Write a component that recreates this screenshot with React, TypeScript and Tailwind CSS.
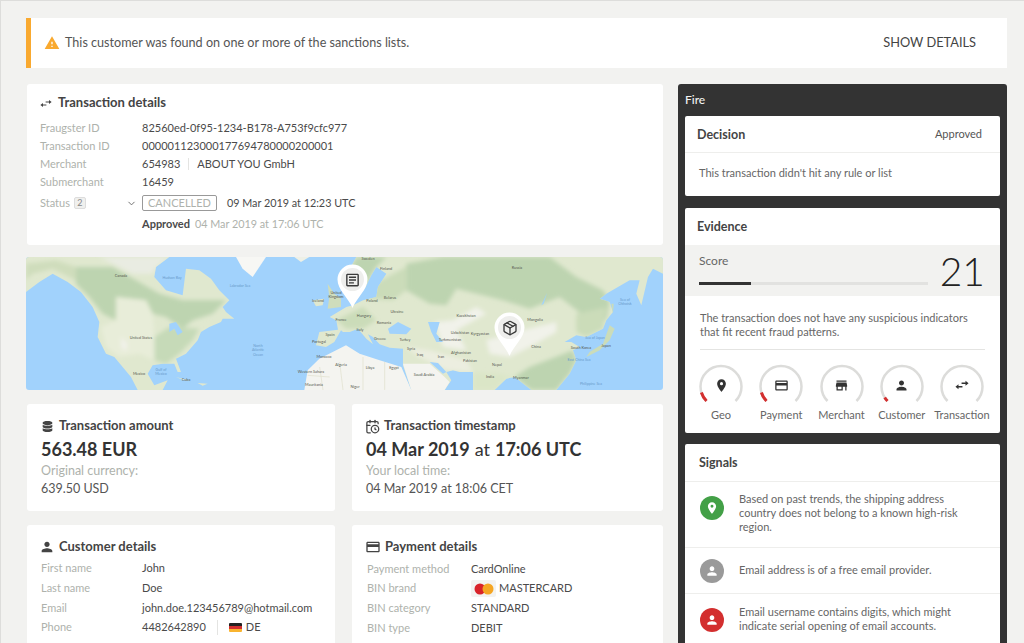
import { CalendarClock, ChevronDown, Package } from 'lucide-react';
import { FaDatabase } from 'react-icons/fa';
import { MdCreditCard, MdLocationOn, MdOutlineArticle, MdPerson, MdStore, MdWarning } from 'react-icons/md';
import type { ReactNode } from 'react';

const SEA = '#a1d2fc';
const LAND = '#e0e8cf';
const FOREST = '#bdd4b0';
const PALE = '#f1f2ea';

const AMERICA =
  'M0 0H430L390 30L385 60L420 100L470 115L480 35L520 40L555 65L580 100L610 130L590 150L600 165L625 185L590 185L585 195L550 210L525 225L515 250L480 290L450 305L465 345L455 345L445 320L410 320L380 325L365 350L385 385L425 370L410 399H335L315 360L265 300L240 290L215 240L220 195L200 150L165 105L125 75L80 50L40 75L0 105Z';
const EURASIA =
  'M40 0H960V50L930 35L915 60L895 145L880 110L890 70L860 70L790 110L770 125L800 135L810 165L790 190L780 215L730 240L700 235L665 255L685 255L710 270L690 280L700 310L680 350L640 399H565L515 360L490 365L455 399H390V345L350 345L330 340L310 345L325 370L305 399H205L180 325L180 275L140 272L110 262L90 240L75 232L90 262L70 245L45 215L20 225L0 225L-6 220L-26 255L-51 270L-81 265L-71 225L-15 218L-20 190L-40 180L10 150L30 145L60 130L100 120L105 90L130 50L100 30L85 55L65 95L30 100L10 55Z';

const labels: [string, number, number][] = [
  ['Canada', 95, 20],
  ['United States', 115, 82],
  ['Mexico', 113, 118],
  ['Cuba', 160, 124],
  ['Iceland', 292, 45],
  ['United', 310, 37],
  ['Kingdom', 310, 40.5],
  ['Spain', 304, 79],
  ['Portugal', 293, 86],
  ['France', 315, 64],
  ['Morocco', 298, 101],
  ['Algeria', 315, 109],
  ['Mauritania', 288, 129],
  ['Western Sahara', 285, 116],
  ['Sweden', 342, 3],
  ['Finland', 360, 13],
  ['Poland', 346, 45],
  ['Belarus', 364, 42],
  ['Ukraine', 371, 56],
  ['Romania', 358, 67],
  ['Italy', 334, 74],
  ['Greece', 354, 83],
  ['Turkey', 379, 84],
  ['Hungary', 338, 60],
  ['Syria', 385, 93],
  ['Iraq', 394, 99],
  ['Iran', 415, 101],
  ['Afghanistan', 435, 97],
  ['Pakistan', 444, 105],
  ['Saudi Arabia', 398, 119],
  ['Libya', 344, 112],
  ['Egypt', 368, 112],
  ['Niger', 329, 131],
  ['Kazakhstan', 440, 60],
  ['Uzbekistan', 434, 77],
  ['Kyrgyzstan', 454, 78],
  ['Turkmenistan', 424, 84],
  ['Mongolia', 509, 64],
  ['China', 510, 91],
  ['Nepal', 471, 109],
  ['India', 464, 121],
  ['Myanmar', 495, 122],
  ['Russia', 491, 12],
  ['South Korea', 555, 92],
  ['Japan', 580, 90],
];

const seaLabels: [string, number, number][] = [
  ['Hudson Bay', 146, 22],
  ['Labrador Sea', 214, 30],
  ['North', 232, 90],
  ['Atlantic', 232, 94],
  ['Ocean', 232, 99],
  ['Gulf of', 135, 114],
  ['Mexico', 135, 118],
  ['Sea of Japan', 569, 82],
  ['East China Sea', 553, 104],
  ['Philippine Sea', 565, 128],
  ['Sea of', 599, 44],
  ['Okhotsk', 599, 47.5],
];

// Two stubby arrows, the packages' compare/swap icons come out too thin at this size.
function Arrows({ className }: { className?: string }) {
  return (
    <svg viewBox="0 0 16 16" className={className} fill="currentColor">
      <path d="M7.5 5.2H12V3.2L15.5 6L12 8.8V6.8H7.5Z" />
      <path d="M8.5 10.8H4V12.8L0.5 10L4 7.2V9.2H8.5Z" />
    </svg>
  );
}

// Coastlines traced at 3x from two crops of the map: Americas on the left, Eurasia on the right.
function WorldMap() {
  return (
    <svg viewBox="0 0 637 133" className="block w-full h-full">
      <defs>
        <filter id="soft" x="-10%" y="-10%" width="120%" height="120%">
          <feGaussianBlur stdDeviation="7" />
        </filter>
        <clipPath id="america">
          <path d={AMERICA} />
        </clipPath>
        <clipPath id="eurasia">
          <path d={EURASIA} />
        </clipPath>
      </defs>
      <rect width="637" height="133" fill={SEA} />
      <g transform="scale(0.3333)">
        <path d={AMERICA} fill={LAND} />
        <g clipPath="url(#america)">
          <g filter="url(#soft)">
            <path d="M220 0H430L390 30L380 50L320 50L260 20Z" fill="#e9ece2" />
            <path d="M150 30L260 30L330 70L400 110L470 130L600 130L560 170L500 190L470 215L420 180L380 170L360 130L270 120L270 190L230 170L190 120L150 80Z" fill={FOREST} />
            <path d="M385 240L430 210L520 215L500 250L460 290L420 320L385 310Z" fill="#c6dab8" />
            <path d="M0 20L90 10L150 30L150 70L80 35L20 50L0 70Z" fill="#cfddbc" />
            <path d="M270 120L360 130L380 170L385 240L385 310L340 290L280 300L240 270L225 210L270 190Z" fill="#e8edd9" />
            <path d="M285 240L305 260L300 285L285 270Z" fill={PALE} />
          </g>
        </g>
        <path d="M430 200L450 195L470 225L455 235L445 215L430 225Z" fill={SEA} />
        <path d="M450 360L495 372L470 368Z" fill={LAND} />
        <path d="M515 378L545 380L530 386Z" fill={LAND} />
        <path d="M630 0H720L680 60L650 35Z" fill="#f7f7f4" />
        <path d="M805 0H850L825 15Z" fill="#eef0e6" />
        <path d="M860 130L895 125L890 145L870 148Z" fill={LAND} />
        <path d="M905 80L925 110L945 125L945 150L905 155L910 120Z" fill="#cfddbc" />
      </g>
      <g transform="translate(317 0) scale(0.3333)">
        <path d={EURASIA} fill={LAND} />
        <g clipPath="url(#eurasia)">
          <g filter="url(#soft)">
            <path d="M190 20L300 0H620L700 60L780 100L800 135L790 190L715 170L650 120L560 155L480 130L420 115L340 95L310 145L260 140L190 100Z" fill={FOREST} />
            <path d="M75 90L190 30V100L150 130L75 125Z" fill="#cbdcb9" />
            <path d="M40 0H130L100 30L85 55L65 95L30 100L10 55Z" fill={FOREST} />
            <path d="M-20 190L60 150L100 190L60 215L10 215Z" fill="#cbdcb9" />
            <path d="M560 330L690 280L700 310L680 350L640 399H565L515 360Z" fill={FOREST} />
            <path d="M700 170L790 150L780 215L730 240L700 225Z" fill="#cbdcb9" />
            <path d="M540 220L640 195V225L560 270L500 300L440 290L430 250Z" fill={PALE} />
            <path d="M275 195L330 190L400 150L430 170L340 220L370 280L300 270Z" fill={PALE} />
            <path d="M190 270L260 280L370 310L390 345L310 340L260 315L230 300Z" fill="#eceee0" />
            <path d="M390 345L470 350L515 360L490 365L455 399H390Z" fill="#dbe6c7" />
          </g>
        </g>
        <path d="M180 320L260 320L305 360L320 375L305 399H205Z" fill="#f4f4f0" />
        {/* Africa */}
        <path d="M-116 399L-106 340L-71 305L9 265L50 290L110 310L175 330L205 399Z" fill="#f4f4f0" />
        <path d="M-60 399L-70 330M0 399L-10 315M60 399V300M125 399V315M-106 355L-40 360" fill="none" stroke="#dfe0cc" strokeWidth="2" />
        {/* Seas and islands */}
        <path d="M135 215L165 195L205 215L190 232L140 230Z" fill={SEA} />
        <path d="M255 195L290 195L280 230L300 255L280 255L265 225Z" fill={SEA} />
        <path d="M260 315L300 350L310 345L285 318Z" fill={SEA} />
        <path d="M595 145L612 108L602 140Z" fill={SEA} />
        <path d="M800 205L815 215L800 250L770 280L730 300L740 285L780 260Z" fill="#cbdcb9" />
        <path d="M805 140L812 140L810 170Z" fill="#cbdcb9" />
      </g>
      {labels.map(([text, x, y]) => (
        <text key={text} x={x} y={y} fontSize="3.8" textAnchor="middle" fill="#55584f" fontFamily="Lato, sans-serif">
          {text}
        </text>
      ))}
      {seaLabels.map(([text, x, y]) => (
        <text key={text + y} x={x} y={y} fontSize="3.6" textAnchor="middle" fill="#6a9bcb" fontFamily="Lato, sans-serif">
          {text}
        </text>
      ))}
    </svg>
  );
}

function Pin({ className, children }: { className: string; children: ReactNode }) {
  return (
    <div className={`absolute w-[31px] h-[44px] ${className}`}>
      <svg viewBox="0 0 31 44" className="absolute inset-0 w-full h-full">
        <path d="M15.5 44C11 33 0.5 26 0.5 15.5a15 15 0 0 1 30 0C30.5 26 20 33 15.5 44Z" fill="#fff" />
        <circle cx="15.5" cy="15.5" r="11.5" fill="#eeeeec" />
      </svg>
      <div className="absolute left-[7px] top-[7px] w-[17px] h-[17px] flex items-center justify-center text-[#3a3a3a]">{children}</div>
    </div>
  );
}

function Title({ icon, children }: { icon: ReactNode; children: ReactNode }) {
  return (
    <div className="flex items-center gap-[6px] h-[16px] text-[13px] font-bold text-[#444]">
      <span className="w-[12px] flex justify-center text-[#444]">{icon}</span>
      {children}
    </div>
  );
}

function Row({ label, h, w, children }: { label: ReactNode; h: string; w: string; children: ReactNode }) {
  return (
    <div className={`flex items-center ${h}`}>
      <div className={`${w} shrink-0 text-[#aeb2ac]`}>{label}</div>
      <div className="flex items-center text-[#4a4a4a]">{children}</div>
    </div>
  );
}

function StatCard({ w, icon, title, big, sub, value }: { w: string; icon: ReactNode; title: string; big: ReactNode; sub: string; value: string }) {
  return (
    <div className={`${w} h-[107px] bg-white rounded-[3px] pl-[14px] pt-[14px]`}>
      <Title icon={icon}>{title}</Title>
      <div className="mt-[2px] h-[26px] flex items-center text-[18px] font-bold text-[#333]">{big}</div>
      <div className="mt-[1px] text-[12.5px] leading-[16px] text-[#aeb2ac]">{sub}</div>
      <div className="mt-[1px] text-[12.5px] leading-[18px] text-[#555]">{value}</div>
    </div>
  );
}

function Gauge({ label, red, children }: { label: string; red: string; children: ReactNode }) {
  return (
    <div className="flex flex-col items-center w-[58px]">
      <div className="relative w-[44px] h-[42px]">
        <svg viewBox="0 0 44 42" className="absolute inset-0 w-full h-full" fill="none" strokeWidth="2.5">
          <path d="M7.5 37A20.5 20.5 0 1 1 36.5 37" stroke="#dcdcda" />
          {red && <path d={red} stroke="#d32f2f" strokeWidth="3" />}
        </svg>
        <div className="absolute inset-0 flex items-center justify-center text-[#333] text-[15px]">{children}</div>
      </div>
      <div className="mt-[2px] text-[11px] leading-[14px] text-[#666]">{label}</div>
    </div>
  );
}

function Signal({ color, icon, children, h, lift, iconLift }: { color: string; icon: ReactNode; children: ReactNode; h: string; lift: string; iconLift: string }) {
  return (
    <div className={`flex items-center pl-[15px] pr-[20px] border-t border-[#eeeeec] ${h}`}>
      <div className={`w-[24px] h-[24px] shrink-0 rounded-full flex items-center justify-center text-white text-[14px] ${color} ${iconLift}`}>{icon}</div>
      <div className={`ml-[15px] text-[11px] leading-[14px] text-[#666] ${lift}`}>{children}</div>
    </div>
  );
}

export default function App() {
  return (
    <div className="w-[1024px] h-[643px] overflow-hidden bg-[#f2f2f0] border-t border-l border-[#dddddb] pl-[25px] pt-[17px] font-['Lato',sans-serif]">
      {/* Sanctions banner */}
      <div className="w-[981px] h-[50px] bg-white border-l-[5px] border-[#f9a92f] flex items-center pl-[13px] pr-[31px]">
        <MdWarning className="text-[#f9a92f] text-[16px]" />
        <span className="ml-[5px] text-[12.6px] text-[#555]">This customer was found on one or more of the sanctions lists.</span>
        <span className="ml-auto text-[12.8px] text-[#444]">SHOW DETAILS</span>
      </div>

      <div className="flex gap-[15px] mt-[16px]">
        {/* Left column */}
        <div className="w-[637px] shrink-0">
          <div className="h-[161px] bg-white rounded-[3px] pl-[13px] pt-[11px] ml-[1px] text-[11px]">
            <Title icon={<Arrows className="w-[13px] h-[13px]" />}>Transaction details</Title>
            <div className="mt-[8px]">
              <Row label="Fraugster ID" h="h-[18px]" w="w-[102px]">82560ed-0f95-1234-B178-A753f9cfc977</Row>
              <Row label="Transaction ID" h="h-[18px]" w="w-[102px]">000001123000177694780000200001</Row>
              <Row label="Merchant" h="h-[18px]" w="w-[102px]">
                654983
                <span className="mx-[8px] h-[12px] border-l border-[#e4e4e2]" />
                ABOUT YOU GmbH
              </Row>
              <Row label="Submerchant" h="h-[18px]" w="w-[102px]">16459</Row>
              <Row
                h="h-[24px]"
                w="w-[102px]"
                label={
                  <div className="flex items-center">
                    Status
                    <span className="ml-[4px] w-[12px] h-[12px] bg-[#f0f0ee] border border-[#ddd] rounded-[2px] text-[9px] leading-[10px] text-center text-[#888]">2</span>
                    <ChevronDown className="ml-[40px] w-[11px] h-[11px] text-[#666]" />
                  </div>
                }
              >
                <span className="h-[16px] px-[5px] border border-[#999] rounded-[2px] text-[11px] leading-[14px] text-[#aeb2ac]">CANCELLED</span>
                <span className="ml-[10px] text-[10.8px]">09 Mar 2019 at 12:23 UTC</span>
              </Row>
              <Row label="" h="h-[18px]" w="w-[102px]">
                <b className="font-bold">Approved</b>
                <span className="ml-[5px] text-[10.8px] text-[#aeb2ac]">04 Mar 2019 at 17:06 UTC</span>
              </Row>
            </div>
          </div>

          <div className="relative h-[133px] mt-[12px] rounded-[3px] overflow-hidden">
            <WorldMap />
            <Pin className="left-[311px] top-[7px]"><MdOutlineArticle className="text-[18px]" /></Pin>
            <Pin className="left-[468px] top-[55px]"><Package className="w-[16px] h-[16px]" /></Pin>
          </div>

          <div className="flex gap-[17px] mt-[14px] ml-[1px]">
            <StatCard w="w-[308px]" icon={<FaDatabase className="text-[11px]" />} title="Transaction amount" big="563.48 EUR" sub="Original currency:" value="639.50 USD" />
            <StatCard
              w="w-[311px]"
              icon={<CalendarClock className="w-[15px] h-[15px] shrink-0" />}
              title="Transaction timestamp"
              big={
                <>
                  04 Mar 2019 <span className="font-normal mx-[5px]">at</span> 17:06 UTC
                </>
              }
              sub="Your local time:"
              value="04 Mar 2019 at 18:06 CET"
            />
          </div>

          <div className="flex gap-[17px] mt-[14px] ml-[1px] text-[11px]">
            <div className="w-[308px] h-[130px] bg-white rounded-[3px] pl-[14px] pt-[14px]">
              <Title icon={<MdPerson className="text-[16px] shrink-0" />}>Customer details</Title>
              <div className="mt-[3px]">
                <Row label="First name" h="h-[20px]" w="w-[101px]">John</Row>
                <Row label="Last name" h="h-[20px]" w="w-[101px]">Doe</Row>
                <Row label="Email" h="h-[20px]" w="w-[101px]">john.doe.123456789@hotmail.com</Row>
                <Row label="Phone" h="h-[18px]" w="w-[101px]">
                  4482642890
                  <span className="mx-[11px] h-[15px] border-l border-[#e4e4e2]" />
                  <span className="w-[13px] h-[9px] rounded-[1px] overflow-hidden flex flex-col">
                    <span className="h-[3px] bg-[#222]" />
                    <span className="h-[3px] bg-[#d32f2f]" />
                    <span className="h-[3px] bg-[#f9b42f]" />
                  </span>
                  <span className="ml-[4px]">DE</span>
                </Row>
              </div>
            </div>
            <div className="w-[311px] h-[130px] bg-white rounded-[3px] pl-[15px] pt-[14px]">
              <Title icon={<MdCreditCard className="text-[16px] shrink-0" />}>Payment details</Title>
              <div className="mt-[4px]">
                <Row label="Payment method" h="h-[20px]" w="w-[104px]">CardOnline</Row>
                <Row label="BIN brand" h="h-[19px]" w="w-[104px]">
                  <span className="w-[25px] h-[17px] bg-[#f3f3f1] rounded-[2px] flex items-center justify-center">
                    <svg viewBox="0 0 20 12" className="w-[20px] h-[12px]">
                      <circle cx="6" cy="6" r="5.5" fill="#d8232a" />
                      <circle cx="14" cy="6" r="5.5" fill="#f5a623" />
                    </svg>
                  </span>
                  <span className="ml-[3px]">MASTERCARD</span>
                </Row>
                <Row label="BIN category" h="h-[21px]" w="w-[104px]">STANDARD</Row>
                <Row label="BIN type" h="h-[19px]" w="w-[104px]">DEBIT</Row>
              </div>
            </div>
          </div>
        </div>

        {/* Fire panel */}
        <div className="w-[329px] h-[600px] bg-[#333] rounded-t-[3px] px-[7px]">
          <div className="h-[32px] flex items-center text-[12px] font-medium text-[#f2f2f0]">Fire</div>

          <div className="h-[80px] bg-white rounded-[2px]">
            <div className="h-[37px] flex items-center justify-between pl-[12px] pr-[18px] border-b border-[#eeeeec]">
              <span className="pt-[3px] text-[12.5px] font-bold text-[#444]">Decision</span>
              <span className="text-[11px] text-[#555]">Approved</span>
            </div>
            <div className="pl-[14px] pt-[13px] text-[11px] leading-[14px] text-[#666]">This transaction didn't hit any rule or list</div>
          </div>

          <div className="h-[225px] mt-[12px] bg-white rounded-[2px]">
            <div className="h-[37px] flex items-center pl-[12px] pt-[2px] text-[12.5px] font-bold text-[#444]">Evidence</div>
            <div className="h-[51px] bg-[#f2f2f0] flex pl-[14px] pr-[15px]">
              <div className="w-[229px] pt-[8px]">
                <div className="text-[12px] leading-[15px] text-[#666]">Score</div>
                <div className="mt-[14px] h-[3px] bg-[#e2e2e0]">
                  <div className="h-[3px] w-[52px] bg-[#333]" />
                </div>
              </div>
              <div className="ml-auto pt-[1px] text-[39px] leading-[51px] font-light text-[#222]">21</div>
            </div>
            <div className="mx-[15px] pt-[15px] pb-[10px] border-b border-[#e4e4e2] text-[11px] leading-[14px] text-[#666]">
              The transaction does not have any suspicious indicators that fit recent fraud patterns.
            </div>
            <div className="flex justify-between pl-[7px] pr-[9px] pt-[14px]">
              <Gauge label="Geo" red="M7.5 37A20.5 20.5 0 0 1 2.4 28.5"><MdLocationOn /></Gauge>
              <Gauge label="Payment" red="M7.5 37A20.5 20.5 0 0 1 2.4 28.5"><MdCreditCard /></Gauge>
              <Gauge label="Merchant" red=""><MdStore /></Gauge>
              <Gauge label="Customer" red="M7.5 37A20.5 20.5 0 0 1 4.7 33.5"><MdPerson /></Gauge>
              <Gauge label="Transaction" red=""><Arrows className="w-[14px] h-[14px]" /></Gauge>
            </div>
          </div>

          <div className="mt-[11px] bg-white rounded-t-[2px]">
            <div className="h-[37px] flex items-center pl-[14px] pt-[2px] text-[12.5px] font-bold text-[#444]">Signals</div>
            <Signal color="bg-[#43a047]" icon={<MdLocationOn />} h="h-[66px]" lift="mb-[3px]" iconLift="mb-[14px]">
              Based on past trends, the shipping address country does not belong to a known high-risk region.
            </Signal>
            <Signal color="bg-[#9a9a9a]" icon={<MdPerson />} h="h-[46px]" lift="mb-[2px]" iconLift="">Email address is of a free email provider.</Signal>
            <Signal color="bg-[#d32f2f]" icon={<MdPerson />} h="h-[52px]" lift="mb-[2px]" iconLift="">
              Email username contains digits, which might indicate serial opening of email accounts.
            </Signal>
          </div>
        </div>
      </div>
    </div>
  );
}
